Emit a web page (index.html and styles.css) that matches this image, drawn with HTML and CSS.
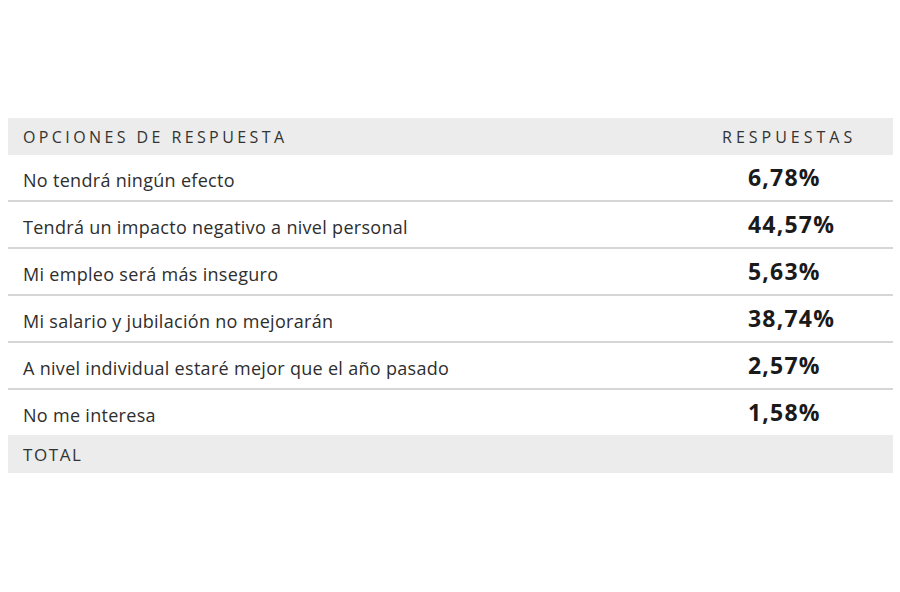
FILE: index.html
```html
<!DOCTYPE html>
<html lang="es">
<head>
<meta charset="utf-8">
<title>Opciones de respuesta</title>
<link rel="stylesheet" href="styles.css">
</head>
<body>
<table class="survey">
  <thead>
    <tr class="band">
      <th class="opt">OPCIONES DE RESPUESTA</th>
      <th class="val">RESPUESTAS</th>
    </tr>
  </thead>
  <tbody>
    <tr class="row"><td class="opt">No tendrá ningún efecto</td><td class="num">6,78%</td></tr>
    <tr class="row"><td class="opt">Tendrá un impacto negativo a nivel personal</td><td class="num">44,57%</td></tr>
    <tr class="row"><td class="opt">Mi empleo será más inseguro</td><td class="num">5,63%</td></tr>
    <tr class="row"><td class="opt">Mi salario y jubilación no mejorarán</td><td class="num">38,74%</td></tr>
    <tr class="row"><td class="opt">A nivel individual estaré mejor que el año pasado</td><td class="num">2,57%</td></tr>
    <tr class="row last"><td class="opt">No me interesa</td><td class="num">1,58%</td></tr>
  </tbody>
  <tfoot>
    <tr class="band total">
      <td class="opt">TOTAL</td>
      <td class="num"></td>
    </tr>
  </tfoot>
</table>
</body>
</html>
```
FILE: styles.css
```css
html, body {
  margin: 0;
  padding: 0;
  background: #ffffff;
}

body {
  padding: 118px 7px 0 8px;
  font-family: "Open Sans", "Noto Sans", sans-serif;
  color: #2b2b2b;
}

.survey {
  width: 885px;
  border-collapse: collapse;
  border-spacing: 0;
}

.survey th,
.survey td {
  padding: 0;
  text-align: left;
  vertical-align: middle;
}

.band {
  background: #ebeceb;
}

.band th {
  height: 36px;
  font-weight: 400;
  font-size: 16px;
  letter-spacing: 3.4px;
  color: #333;
  padding-top: 1px;
}

.band .opt {
  padding-left: 15px;
}

.band .val {
  width: 171px;
  letter-spacing: 4px;
}

.row td {
  height: 41px;
  border-bottom: 2px solid #d6d6d6;
  padding-top: 4px;
}

.row.last td {
  border-bottom: none;
}

.row .opt {
  padding-left: 15px;
  font-size: 18px;
  letter-spacing: 0.3px;
  color: #2e2e2e;
}

.row .num {
  padding-left: 26px;
  padding-top: 0;
  padding-bottom: 2px;
  font-size: 23px;
  font-weight: 700;
  letter-spacing: 1.2px;
  color: #1a1a1a;
}

.total td {
  height: 37px;
  padding-top: 1px;
}

.total .opt {
  padding-left: 15px;
  font-size: 17px;
  letter-spacing: 1.6px;
  color: #333;
}
```
